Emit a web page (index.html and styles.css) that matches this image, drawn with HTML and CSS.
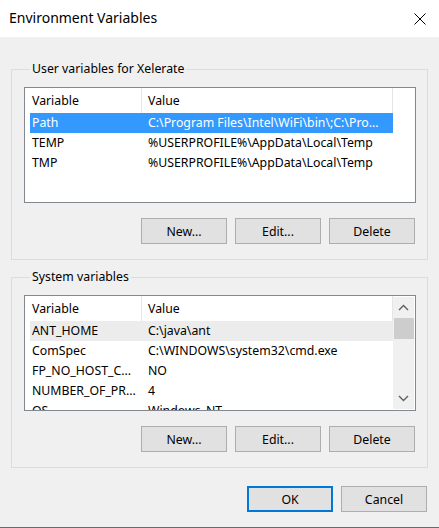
FILE: index.html
```html
<!DOCTYPE html>
<html>
<head>
<meta charset="utf-8">
<title>Environment Variables</title>
<link rel="stylesheet" href="styles.css">
</head>
<body>
<div class="window">
  <header class="titlebar">
    <span class="title">Environment Variables</span>
    <svg class="close" width="12" height="12" viewBox="0 0 12 12" aria-label="Close">
      <path d="M0.5 0.5 L11.5 11.5 M11.5 0.5 L0.5 11.5" stroke="#000" stroke-width="1" fill="none"/>
    </svg>
  </header>

  <main class="content">
    <fieldset class="group">
      <legend>User variables for Xelerate</legend>
      <div class="list">
        <div class="list-main">
          <div class="list-header">
            <div class="cell c1">Variable</div>
            <div class="cell c2">Value</div>
          </div>
          <div class="rows">
            <div class="row selected"><div class="cell c1">Path</div><div class="cell c2">C:\Program Files\Intel\WiFi\bin\;C:\Pro...</div></div>
            <div class="row"><div class="cell c1">TEMP</div><div class="cell c2">%USERPROFILE%\AppData\Local\Temp</div></div>
            <div class="row"><div class="cell c1">TMP</div><div class="cell c2">%USERPROFILE%\AppData\Local\Temp</div></div>
          </div>
        </div>
      </div>
      <div class="buttons">
        <button class="btn">New...</button>
        <button class="btn">Edit...</button>
        <button class="btn">Delete</button>
      </div>
    </fieldset>

    <fieldset class="group second">
      <legend>System variables</legend>
      <div class="list">
        <div class="list-main">
          <div class="list-header">
            <div class="cell c1">Variable</div>
            <div class="cell c2">Value</div>
          </div>
          <div class="rows">
            <div class="row inactive"><div class="cell c1">ANT_HOME</div><div class="cell c2">C:\java\ant</div></div>
            <div class="row"><div class="cell c1">ComSpec</div><div class="cell c2">C:\WINDOWS\system32\cmd.exe</div></div>
            <div class="row"><div class="cell c1">FP_NO_HOST_C...</div><div class="cell c2">NO</div></div>
            <div class="row"><div class="cell c1">NUMBER_OF_PR...</div><div class="cell c2">4</div></div>
            <div class="row"><div class="cell c1">OS</div><div class="cell c2">Windows_NT</div></div>
          </div>
        </div>
        <div class="scrollbar">
          <div class="arrow">
            <svg width="11" height="7" viewBox="0 0 11 7"><path d="M1 6 L5.5 1.5 L10 6" stroke="#606060" stroke-width="1.4" fill="none"/></svg>
          </div>
          <div class="thumb"></div>
          <div class="track"></div>
          <div class="arrow">
            <svg width="11" height="7" viewBox="0 0 11 7"><path d="M1 1 L5.5 5.5 L10 1" stroke="#606060" stroke-width="1.4" fill="none"/></svg>
          </div>
        </div>
      </div>
      <div class="buttons">
        <button class="btn">New...</button>
        <button class="btn">Edit...</button>
        <button class="btn">Delete</button>
      </div>
    </fieldset>

    <div class="dialog-buttons">
      <button class="btn default">OK</button>
      <button class="btn">Cancel</button>
    </div>
  </main>
</div>
</body>
</html>
```
FILE: styles.css
```css
html, body {
  margin: 0;
  padding: 0;
}

body {
  background: #f0f0f0;
  font-family: "Noto Sans", "Open Sans", sans-serif;
  font-size: 12.3px;
  color: #000;
}

.window {
  height: 528px;
  box-sizing: border-box;
  border-bottom: 1px solid #2b79b8;
  overflow: hidden;
}

.titlebar {
  height: 37px;
  background: #fff;
  display: flex;
  align-items: center;
  justify-content: space-between;
  padding: 0 13px 0 9px;
}

.title {
  font-size: 14px;
  line-height: 18px;
  color: #000;
  padding-bottom: 1px;
}

.close {
  display: block;
  margin-top: 0;
}

.content {
  padding: 0 11px;
}

.group {
  margin: 24px 0 0 0;
  padding: 10px 11px 15px 12px;
  border: 1px solid #dcdcdc;
  min-width: 0;
}

.group.second {
  margin-top: 9px;
}

.group legend {
  margin-left: 6px;
  padding: 0 2px;
  line-height: 16px;
}

.list {
  height: 116px;
  box-sizing: border-box;
  border: 1px solid #828790;
  background: #fff;
  display: flex;
  overflow: hidden;
}

.list-main {
  flex: 0 0 368px;
  box-sizing: border-box;
  padding-left: 5px;
  overflow: hidden;
}

.list-header {
  display: flex;
  height: 25px;
  align-items: stretch;
}

.list-header .cell {
  border-right: 1px solid #e5e5e5;
  display: flex;
  align-items: center;
}

.cell {
  white-space: nowrap;
  overflow: hidden;
  box-sizing: border-box;
}

.c1 {
  width: 112px;
  padding-left: 2px;
}

.c2 {
  width: 251px;
  padding-left: 6px;
}

.row {
  display: flex;
  height: 20px;
  line-height: 20px;
}

.row.selected {
  background: #3399ff;
  color: #fff;
}

.row.inactive {
  background: #ececec;
}

.scrollbar {
  flex: 1;
  margin: 1px 1px 1px 0;
  background: #f0f0f0;
  display: flex;
  flex-direction: column;
}

.arrow {
  height: 21px;
  display: flex;
  align-items: center;
  justify-content: center;
}

.thumb {
  height: 21px;
  margin-left: 1px;
  background: #cdcdcd;
}

.track {
  flex: 1;
}

.buttons {
  display: flex;
  justify-content: flex-end;
  gap: 8px;
  margin-top: 15px;
  padding-right: 1px;
}

.btn {
  width: 86px;
  height: 26px;
  box-sizing: border-box;
  background: #e1e1e1;
  border: 1px solid #adadad;
  border-radius: 0;
  font-family: inherit;
  font-size: 12.3px;
  color: #000;
  padding: 0;
  margin: 0;
}

.btn.default {
  border: 2px solid #0078d7;
}

.dialog-buttons {
  display: flex;
  justify-content: flex-end;
  gap: 8px;
  margin-top: 18px;
  padding-right: 1px;
}
```
